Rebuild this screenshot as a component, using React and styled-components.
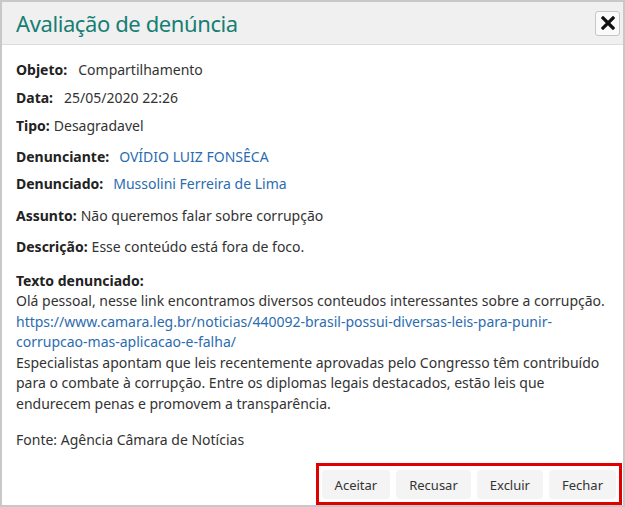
import React from 'react'
import styled, { createGlobalStyle } from 'styled-components'

const Global = createGlobalStyle`
  html, body { margin: 0; padding: 0; background: #fff; }
  body { font-family: "Noto Sans", "Open Sans", sans-serif; }
`

const report = {
  objeto: 'Compartilhamento',
  data: '25/05/2020 22:26',
  tipo: 'Desagradavel',
  denunciante: 'OVÍDIO LUIZ FONSÊCA',
  denunciado: 'Mussolini Ferreira de Lima',
  assunto: 'Não queremos falar sobre corrupção',
  descricao: 'Esse conteúdo está fora de foco.',
}

const App = () => {
  return (
    <>
      <Global />
      <Dialog>
        <Header>
          <Title>Avaliação de denúncia</Title>
          <CloseButton aria-label="Fechar">
            <svg width="14" height="14" viewBox="0 0 14 14">
              <path d="M2 2 L12 12 M12 2 L2 12" stroke="#111" strokeWidth="3.2" strokeLinecap="square" />
            </svg>
          </CloseButton>
        </Header>
        <Body>
          <Field $mt={7} $gap={11}><b>Objeto:</b><Value>{report.objeto}</Value></Field>
          <Field $mt={7} $gap={11}><b>Data:</b><Value>{report.data}</Value></Field>
          <Field $mt={8}><b>Tipo:</b><Value>{report.tipo}</Value></Field>
          <Field $mt={10} $gap={10}><b>Denunciante:</b><Value $link>{report.denunciante}</Value></Field>
          <Field $mt={7} $gap={10}><b>Denunciado:</b><Value $link>{report.denunciado}</Value></Field>
          <Field $mt={11}><b>Assunto:</b><Value>{report.assunto}</Value></Field>
          <Field $mt={11}><b>Descrição:</b><Value>{report.descricao}</Value></Field>
          <Reported>
            <b>Texto denunciado:</b>
            <p>Olá pessoal, nesse link encontramos diversos conteudos interessantes sobre a corrupção.</p>
            <Link href="#">https://www.camara.leg.br/noticias/440092-brasil-possui-diversas-leis-para-punir-corrupcao-mas-aplicacao-e-falha/</Link>
            <p>Especialistas apontam que leis recentemente aprovadas pelo Congresso têm contribuído para o combate à corrupção. Entre os diplomas legais destacados, estão leis que endurecem penas e promovem a transparência.</p>
            <p className="source">Fonte: Agência Câmara de Notícias</p>
          </Reported>
        </Body>
        <Footer>
          <Actions>
            <ActionButton>Aceitar</ActionButton>
            <ActionButton>Recusar</ActionButton>
            <ActionButton>Excluir</ActionButton>
            <ActionButton>Fechar</ActionButton>
          </Actions>
        </Footer>
      </Dialog>
    </>
  )
}

const Dialog = styled.div`
  width: 625px;
  height: 507px;
  box-sizing: border-box;
  border: 2px solid #c8c8c8;
  background: #fff;
  display: flex;
  flex-direction: column;
  color: #333;
  font-size: 14px;
`

const Header = styled.div`
  height: 42px;
  background: #f0f0f0;
  border-bottom: 1px solid #dcdcdc;
  display: flex;
  align-items: center;
  justify-content: space-between;
  padding: 0 3px 0 14px;
`

const Title = styled.h2`
  margin: 0;
  font-weight: 400;
  font-size: 22px;
  color: #177e74;
  letter-spacing: -0.4px;
`

const CloseButton = styled.button`
  width: 25px;
  height: 25px;
  padding: 0;
  display: flex;
  align-items: center;
  justify-content: center;
  background: #fafafa;
  border: 1px solid #c6c6c6;
  border-radius: 3px;
`

const Body = styled.div`
  flex: 1;
  padding: 8px 14px 0;
  line-height: 20.5px;
`

const Field = styled.div`
  display: flex;
  gap: ${p => p.$gap || 4}px;
  margin-top: ${p => p.$mt || 8}px;
  b { font-weight: 700; color: #222; }
`

const Value = styled.span`
  color: ${p => (p.$link ? '#2b6cb0' : '#333')};
`

const Reported = styled.div`
  margin-top: 13px;
  b { display: block; font-weight: 700; color: #222; }
  p { margin: 0; }
  .source { margin-top: 16px; }
`

const Link = styled.a`
  display: block;
  color: #2b6cb0;
  text-decoration: none;
  word-break: break-word;
`

const Footer = styled.div`
  display: flex;
  justify-content: flex-end;
  padding: 0 1px 0 0;
`

const Actions = styled.div`
  display: flex;
  gap: 6px;
  padding: 4px 3px 3px 3px;
  border: 3px solid #e00000;
`

const ActionButton = styled.button`
  height: 29px;
  padding: 0 13px;
  border: none;
  border-radius: 4px;
  background: #f4f4f4;
  color: #333;
  font-family: inherit;
  font-size: 13px;
`

export default App
